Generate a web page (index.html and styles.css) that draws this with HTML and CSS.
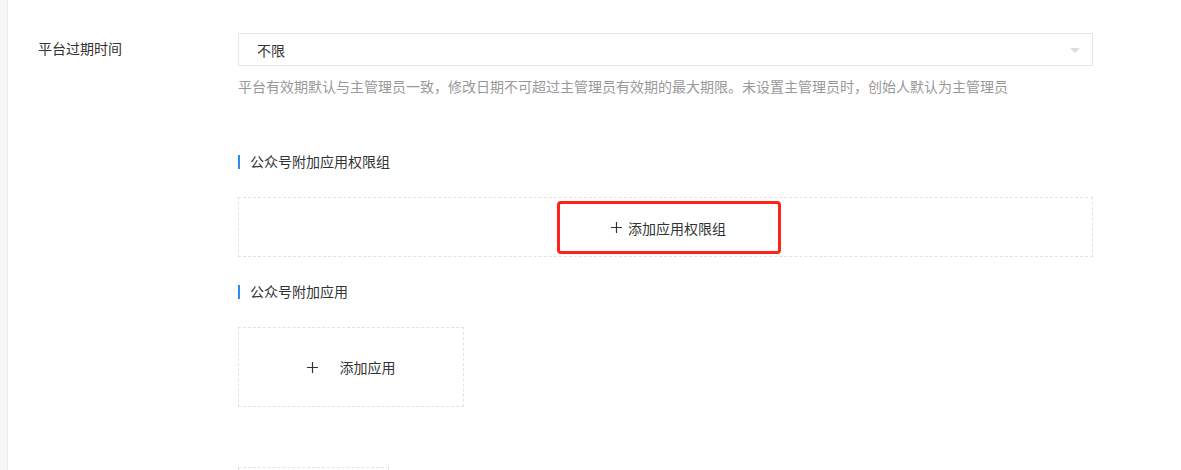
FILE: index.html
```html
<!DOCTYPE html>
<html lang="zh-CN">
<head>
  <meta charset="UTF-8" />
  <title>公众号设置</title>
  <link rel="stylesheet" href="styles.css">
</head>
<body>
  <div class="sidebar"></div>
  <div class="main">
    <div class="form-row">
      <div class="form-label">平台过期时间</div>
      <div class="form-field">
        <div class="select">
          <span>不限</span>
          <span class="arrow"></span>
        </div>
        <p class="help">平台有效期默认与主管理员一致，修改日期不可超过主管理员有效期的最大期限。未设置主管理员时，创始人默认为主管理员</p>

        <h3 class="section-title">公众号附加应用权限组</h3>
        <div class="add-box wide">
          <button class="add-group">
            <svg width="11" height="11" viewBox="0 0 11 11"><path d="M5.5 0v11M0 5.5h11" stroke="#333" stroke-width="1.2"/></svg>
            添加应用权限组
          </button>
        </div>

        <h3 class="section-title">公众号附加应用</h3>
        <div class="add-box app">
          <svg width="11" height="11" viewBox="0 0 11 11"><path d="M5.5 0v11M0 5.5h11" stroke="#333" stroke-width="1.2"/></svg>
          <span>添加应用</span>
        </div>

        <div class="add-box small"></div>
      </div>
    </div>
  </div>
</body>
</html>
```

FILE: styles.css
```css
body { margin: 0; display: flex; font-family: "Liberation Sans", "Noto Sans CJK SC", sans-serif; font-size: 14px; color: #333; background: #fff; height: 470px; overflow: hidden; }
.sidebar { width: 7px; background: #f5f6f8; border-right: 1px solid #ebebeb; flex-shrink: 0; }
.main { flex: 1; padding: 33px 0 0 30px; }
.form-row { display: flex; }
.form-label { width: 200px; line-height: 33px; }
.form-field { width: 855px; }
.select { height: 33px; box-sizing: border-box; border: 1px solid #e6e6e6; display: flex; align-items: center; justify-content: space-between; padding: 0 12px 0 18px; }
.arrow { width: 0; height: 0; border-left: 5px solid transparent; border-right: 5px solid transparent; border-top: 5px solid #dcdcdc; margin-top: 2px; }
.help { margin: 11px 0 0; line-height: 20px; color: #999; }
.section-title { margin: 58px 0 0; font-size: 14px; font-weight: normal; line-height: 20px; border-left: 2px solid #2d8cf0; padding-left: 10px; height: 14px; display: flex; align-items: center; }
.add-box { border: 1px dashed #e3e3e3; box-sizing: border-box; margin-top: 28px; }
.wide { height: 60px; display: flex; justify-content: center; padding-top: 3px; padding-left: 6px; }
.add-group { width: 224px; height: 53px; border: 3px solid #ff2219; border-radius: 4px; background: #fff; font: inherit; color: #333; display: flex; align-items: center; justify-content: center; gap: 6px; padding: 0; }
.wide + .section-title { margin-top: 28px; }
.app { width: 226px; height: 80px; display: flex; align-items: center; justify-content: center; gap: 22px; }
.app + .small { width: 151px; height: 20px; margin-top: 60px; }
```
